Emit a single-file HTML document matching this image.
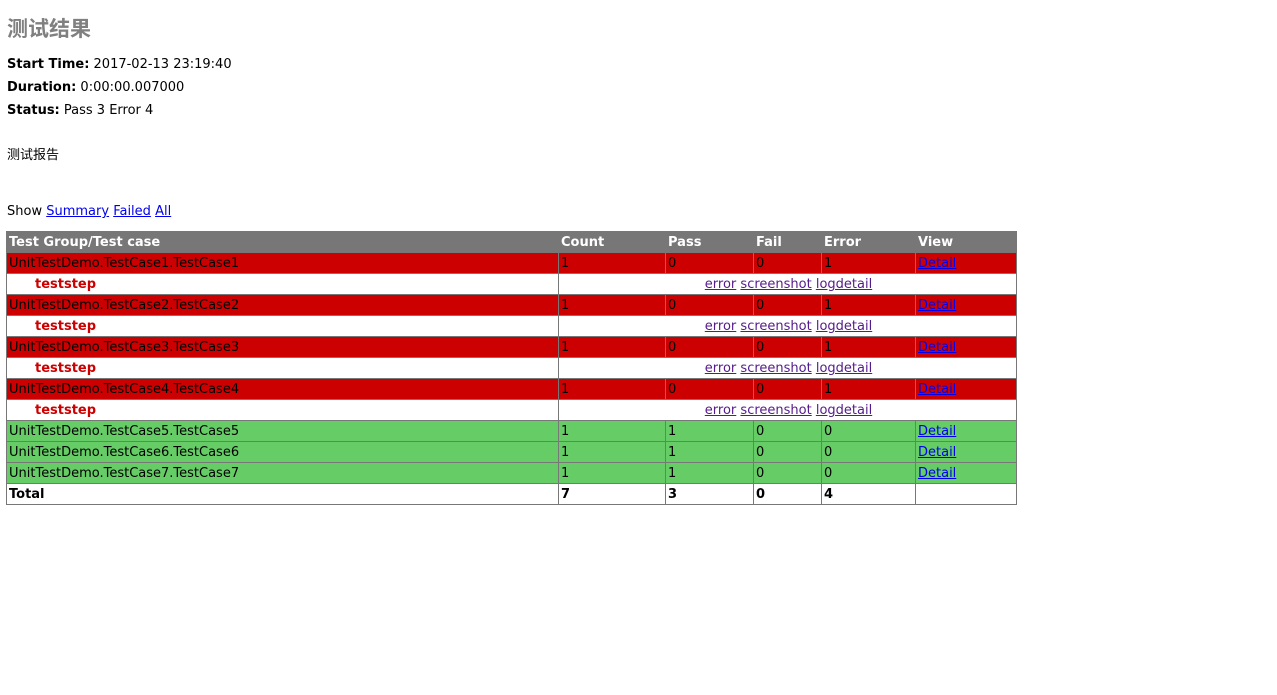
<!DOCTYPE html>
<html><head><meta charset="utf-8"><style>
body{margin:0;font-family:"DejaVu Sans","Noto Sans CJK SC",sans-serif;font-size:13px;color:#000;background:#fff;width:1277px;height:695px;overflow:hidden;position:relative}
.a{position:absolute;left:7px;white-space:nowrap}
h1{position:absolute;left:7px;top:13px;margin:0;font-size:21px;color:#808080;font-family:"Noto Sans CJK SC",sans-serif;font-weight:bold}
a{color:#00e}
table{position:absolute;left:6px;top:231px;border-collapse:collapse;table-layout:fixed;width:1010px}
td{border:1px solid #777;height:20px;padding:1px 0 0 2px;box-sizing:border-box;white-space:nowrap;line-height:19px;font-size:13px}
tr.h td{background:#777;color:#fff;font-weight:bold}
tr.e td{background:#c00;color:#000}
tr.e a{color:#00e}
tr.p td{background:#6c6}
tr.s td{background:#fff}
.st{color:#c00;font-weight:bold;padding-left:28px}
.c{text-align:center}
.c a{color:#551a8b}
tr.t td{font-weight:bold}
</style></head><body>
<h1>测试结果</h1>
<div class="a" style="top:57px"><b>Start Time:</b> 2017-02-13 23:19:40</div>
<div class="a" style="top:80px"><b>Duration:</b> 0:00:00.007000</div>
<div class="a" style="top:103px"><b>Status:</b> Pass 3 Error 4</div>
<div class="a" style="top:144px;font-family:'Noto Sans CJK SC',sans-serif">测试报告</div>
<div class="a" style="top:204px">Show <a href="#">Summary</a> <a href="#">Failed</a> <a href="#">All</a></div>
<table>
<colgroup><col style="width:552px"><col style="width:107px"><col style="width:88px"><col style="width:68px"><col style="width:94px"><col style="width:101px"></colgroup>
<tr class="h"><td>Test Group/Test case</td><td>Count</td><td>Pass</td><td>Fail</td><td>Error</td><td>View</td></tr>
<tr class="e"><td>UnitTestDemo.TestCase1.TestCase1</td><td>1</td><td>0</td><td>0</td><td>1</td><td><a href="#">Detail</a></td></tr>
<tr class="s"><td class="st">teststep</td><td colspan="5" class="c"><a href="#">error</a> <a href="#">screenshot</a> <a href="#">logdetail</a></td></tr>
<tr class="e"><td>UnitTestDemo.TestCase2.TestCase2</td><td>1</td><td>0</td><td>0</td><td>1</td><td><a href="#">Detail</a></td></tr>
<tr class="s"><td class="st">teststep</td><td colspan="5" class="c"><a href="#">error</a> <a href="#">screenshot</a> <a href="#">logdetail</a></td></tr>
<tr class="e"><td>UnitTestDemo.TestCase3.TestCase3</td><td>1</td><td>0</td><td>0</td><td>1</td><td><a href="#">Detail</a></td></tr>
<tr class="s"><td class="st">teststep</td><td colspan="5" class="c"><a href="#">error</a> <a href="#">screenshot</a> <a href="#">logdetail</a></td></tr>
<tr class="e"><td>UnitTestDemo.TestCase4.TestCase4</td><td>1</td><td>0</td><td>0</td><td>1</td><td><a href="#">Detail</a></td></tr>
<tr class="s"><td class="st">teststep</td><td colspan="5" class="c"><a href="#">error</a> <a href="#">screenshot</a> <a href="#">logdetail</a></td></tr>
<tr class="p"><td>UnitTestDemo.TestCase5.TestCase5</td><td>1</td><td>1</td><td>0</td><td>0</td><td><a href="#">Detail</a></td></tr>
<tr class="p"><td>UnitTestDemo.TestCase6.TestCase6</td><td>1</td><td>1</td><td>0</td><td>0</td><td><a href="#">Detail</a></td></tr>
<tr class="p"><td>UnitTestDemo.TestCase7.TestCase7</td><td>1</td><td>1</td><td>0</td><td>0</td><td><a href="#">Detail</a></td></tr>
<tr class="t"><td>Total</td><td>7</td><td>3</td><td>0</td><td>4</td><td></td></tr>
</table>
</body></html>
